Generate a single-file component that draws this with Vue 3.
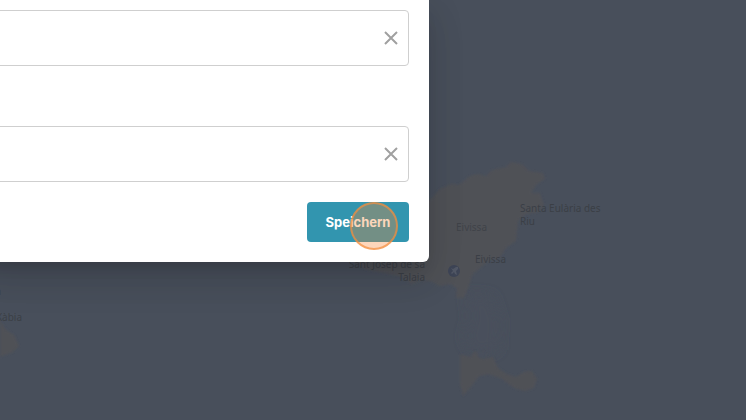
<script setup>
import { ref } from 'vue'

const fields = ref([
  { id: 'field-first', label: 'Erstes Feld', value: '' },
  { id: 'field-second', label: 'Zweites Feld', value: '' },
])

function clear(field) {
  field.value = ''
}
</script>

<template>
  <main class="page">
    <svg class="map" viewBox="0 0 746 420" preserveAspectRatio="xMinYMin slice" aria-hidden="true">
      <defs>
        <filter id="coast" x="-10%" y="-10%" width="120%" height="120%">
          <feGaussianBlur stdDeviation="1" />
        </filter>
        <filter id="shallows" x="-30%" y="-30%" width="160%" height="160%">
          <feGaussianBlur stdDeviation="6" />
        </filter>
      </defs>
      <path class="shallow" filter="url(#shallows)" d="M466 294L492 296L500 320L498 350L474 356L464 338L470 318Z" />
      <g filter="url(#coast)">
        <path class="land" d="M340 250L400 225L425 203L432 198L440 189L451 184L459 185L470 176L477 174L486 176L492 170L506 167L511 162L522 164L529 171L543 173L545 179L537 184L531 193L540 193L544 205L538 212L526 214L518 221L516 241L506 248L500 258L490 260L480 268L472 275L469 286L464 298L456 298L457 288L450 284L440 286L430 281L420 280L412 284L400 276L365 269Z" />
        <path class="land" d="M460 354L470 357L475 351L482 359L493 357L498 368L507 374L516 377L524 372L532 371L537 379L534 388L525 391L514 388L502 379L489 374L479 376L470 388L463 396L460 383Z" />
        <path class="land" d="M0 320L6 330L14 335L19 346L13 352L0 357Z" />
        <path class="water" d="M477 352L482 350L485 354L483 359L478 357Z" />
      </g>
      <circle class="airport" cx="454" cy="271" r="6" />
      <path class="plane" d="M451 268L453 269L456 267L458 267L458 269L456 271L457 275L455 274L454 272L452 274L451 273L453 271Z" />
      <g class="places">
        <text x="520" y="212">Santa Eulària des</text>
        <text x="520" y="225">Riu</text>
        <text class="faint" x="456" y="231">Eivissa</text>
        <text x="475" y="263">Eivissa</text>
        <text x="425" y="268" text-anchor="end">Sant Josep de sa</text>
        <text x="425" y="281" text-anchor="end">Talaia</text>
        <text x="22" y="321" text-anchor="end">Xàbia</text>
        <text x="1" y="295" text-anchor="end">a</text>
      </g>
    </svg>

    <form class="dialog" role="dialog" @submit.prevent>
      <div class="fields">
        <div v-for="field in fields" :key="field.id" class="field">
          <input :id="field.id" v-model="field.value" class="input" type="text" :aria-label="field.label" />
          <button class="clear" type="button" aria-label="Leeren" @click="clear(field)">
            <svg width="14" height="14" viewBox="0 0 14 14" aria-hidden="true">
              <path d="M1 1L13 13M13 1L1 13" />
            </svg>
          </button>
        </div>
      </div>
      <div class="actions">
        <button class="save" type="submit">
          Speichern
          <span class="pointer" aria-hidden="true"></span>
        </button>
      </div>
    </form>
  </main>
</template>

<style>
body {
  background: #484f5b;
}
</style>

<style scoped>
.page {
  position: relative;
  min-height: 100vh;
  overflow: hidden;
  background: #484f5b;
  font-family: Inter, "Liberation Sans", sans-serif;
}

.map {
  position: absolute;
  inset: 0;
  width: 100%;
  height: 100%;
}

.land {
  fill: #505156;
}

.shallow {
  fill: #49505b;
}

.water {
  fill: #484f5b;
}

.airport {
  fill: #3e4556;
}

.plane {
  fill: #525866;
}

.places {
  fill: #3b3f46;
  font-family: "Noto Sans", sans-serif;
  font-size: 10px;
}

.faint {
  fill: #404349;
}

.dialog {
  position: relative;
  box-sizing: border-box;
  margin: 0 317px 0 -20px;
  padding: 10px 20px 20px 0;
  background: #fff;
  border-radius: 0 0 6px 6px;
  box-shadow:
    0 10px 14px -7px rgba(0, 0, 0, 0.14),
    0 20px 36px 0 rgba(0, 0, 0, 0.1),
    0 8px 40px 4px rgba(0, 0, 0, 0.06);
}

.fields {
  display: grid;
  gap: 60px;
}

.field {
  display: flex;
  align-items: center;
  box-sizing: border-box;
  height: 56px;
  padding-right: 4px;
  border: 1px solid #cfcfcf;
  border-radius: 4px;
}

.input {
  flex: 1;
  min-width: 0;
  height: 100%;
  padding: 0 30px;
  border: 0;
  outline: 0;
  background: transparent;
  font: 16px Inter, sans-serif;
}

.clear {
  display: grid;
  place-items: center;
  width: 26px;
  height: 26px;
  padding: 0;
  border: 0;
  background: transparent;
}

.clear path {
  fill: none;
  stroke: #a0a0a0;
  stroke-width: 2;
}

.actions {
  display: flex;
  justify-content: flex-end;
  margin-top: 20px;
}

.save {
  position: relative;
  min-width: 102px;
  height: 40px;
  padding: 0 18px;
  border: 0;
  border-radius: 4px;
  background: #3295af;
  color: #fff;
  font: 700 13px Inter, sans-serif;
}

.pointer {
  position: absolute;
  top: 0;
  right: 11px;
  box-sizing: border-box;
  width: 48px;
  height: 48px;
  border: 2px solid rgba(243, 143, 62, 0.7);
  border-radius: 50%;
  background: rgba(250, 130, 50, 0.33);
}
</style>
